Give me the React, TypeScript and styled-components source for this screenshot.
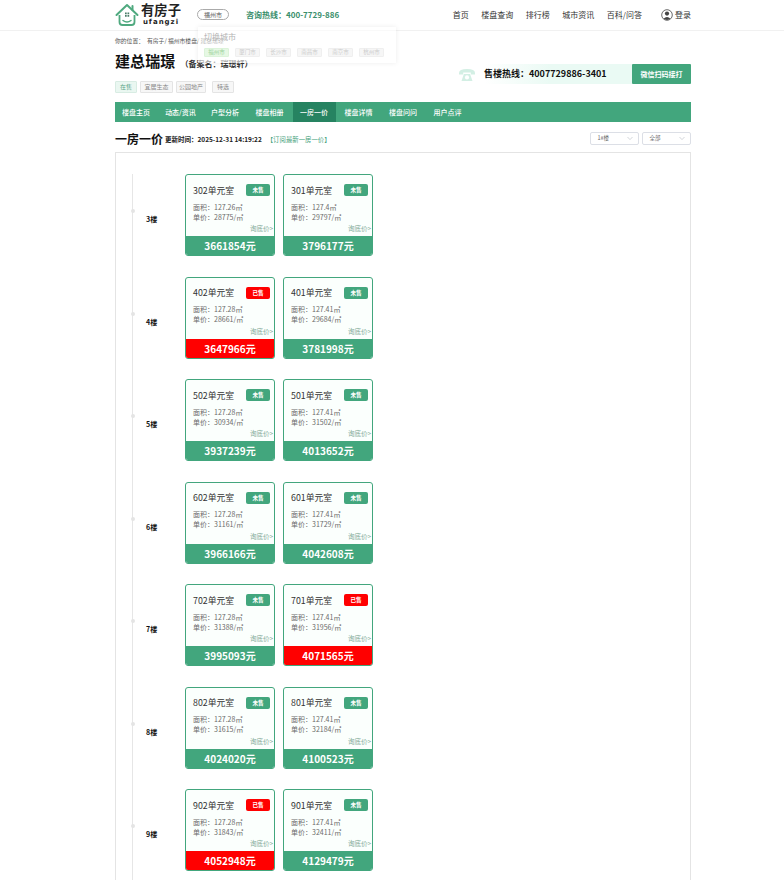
import React from "react";
import styled, { createGlobalStyle } from "styled-components";

const Global = createGlobalStyle`
  html, body { margin: 0; padding: 0; background: #fff; overflow: hidden; height: 880px; }
  body { font-family: "Noto Sans CJK SC", "Noto Sans", sans-serif; color: #222; }
  * { box-sizing: border-box; }
`;
const Page = styled.div`width: 784px; height: 880px; overflow: hidden;`;
const Header = styled.header`height: 31px; border-bottom: 1px solid #f1f1f1;`;
const Wrap = styled.div`width: 576px; margin-left: 115px; position: relative;`;
const HeaderRow = styled(Wrap)`display: flex; align-items: center; height: 29px;`;
const Logo = styled.div`display: flex; align-items: center; width: 66px; flex: none;`;
const LogoText = styled.div`display: flex; flex-direction: column; align-items: center; width: 40px; color: #222;`;
const LogoMain = styled.span`font-size: 13.3px; font-weight: 700; line-height: 12px;`;
const LogoSub = styled.span`font-family: "DejaVu Sans", sans-serif; font-size: 7px; font-weight: 700; line-height: 7px; letter-spacing: 1px; margin-top: 3px;`;
const CityPill = styled.div`margin-left: 16px; width: 32px; height: 11px; border: 1px solid #aaa; border-radius: 6px; font-size: 6px; line-height: 9px; text-align: center; color: #555; flex: none;`;
const Hotline = styled.div`margin-left: 17px; font-size: 8px; font-weight: 700; color: #3a8f6c; white-space: nowrap;`;
const TopNav = styled.nav`margin-left: auto; display: flex; align-items: center; font-size: 8px; color: #333; white-space: nowrap;`;
const TopLink = styled.a`margin-right: 12.5px;`;
const Login = styled.span`display: flex; align-items: center; gap: 2px; margin-left: 19px;`;
const Popup = styled.div`
  position: absolute; left: 83px; top: 27px; width: 198px; height: 36px; background: rgba(255,255,255,.6);
  box-shadow: 0 0 5px rgba(0,0,0,.08); padding: 4px 6px 0; z-index: 2;
`;
const PopupTitle = styled.div`font-size: 8px; line-height: 12px; margin: 0 0 5px; color: #b4b4b4;`;
const PopupChips = styled.div`display: flex; gap: 6px;`;
const PopupChip = styled.span<{ $on?: boolean }>`
  width: 25px; height: 9px; flex: none; text-align: center; font-size: 5.5px; line-height: 7.5px; border-radius: 1px;
  background: ${p => (p.$on ? "#e6f8e4" : "#f6f6f6")}; border: 1px solid ${p => (p.$on ? "#dcf3da" : "#efefef")}; color: ${p => (p.$on ? "#9bd29a" : "#ccc")};
`;
const Crumb = styled.div`margin-top: 5px; font-size: 5.8px; line-height: 10px; color: #555; display: flex; gap: 3px;`;
const TitleRow = styled.div`display: flex; align-items: baseline; margin-top: 5px; height: 20px;`;
const Title = styled.h1`margin: 0; font-size: 15px; line-height: 20px; font-weight: 700; color: #111; letter-spacing: .1px;`;
const Alias = styled.span`margin-left: 5px; font-size: 8px; font-weight: 700; color: #333;`;
const InfoRow = styled.div`display: flex; align-items: flex-start; height: 31px;`;
const Tags = styled.div`display: flex; margin-top: 10px;`;
const Tag = styled.span<{ $on?: boolean; $w: number; $mr: number }>`
  width: ${p => p.$w}px; margin-right: ${p => p.$mr}px; height: 12px; text-align: center; font-size: 6px; line-height: 10px; border-radius: 1px;
  background: ${p => (p.$on ? "#eaf7f1" : "#f7f7f7")}; border: 1px solid ${p => (p.$on ? "#d8ece3" : "#e4e4e4")}; color: ${p => (p.$on ? "#5aa588" : "#888")};
`;
const SaleLine = styled.div`margin-left: auto; margin-top: -7px; display: flex; align-items: center; height: 20px;`;
const Phone = styled.svg`width: 18px; height: 15px; margin-right: 8px; flex: none;`;
const SaleText = styled.div`width: 148px; height: 20px; line-height: 20px; font-size: 9px; font-weight: 700; color: #111; background: linear-gradient(90deg, #fff 0%, #eafaf4 45%, #eafaf4 100%); white-space: nowrap;`;
const WxBtn = styled.div`width: 59px; height: 20px; line-height: 20px; text-align: center; font-size: 7px; font-weight: 700; color: #fff; background: #42a67d; border-radius: 1px;`;
const TabBar = styled.nav`display: flex; height: 20px; background: #42a67d;`;
const Tab = styled.a<{ $on?: boolean }>`
  width: 43px; flex: none; margin-right: 1.5px; text-align: center; line-height: 20px; font-size: 7px; font-weight: 500; color: #fff; white-space: nowrap;
  background: ${p => (p.$on ? "#268361" : "transparent")};
  &:first-child { margin-left: -.5px; }
`;
const HeadRow = styled.div`display: flex; align-items: center; height: 31px; padding-top: 1px;`;
const H2 = styled.h2`margin: 2px 0 0; font-size: 12px; font-weight: 700; color: #111; line-height: 16px;`;
const Upd = styled.span`margin: 2px 0 0 2px; font-size: 6.5px; font-weight: 700; color: #222; white-space: nowrap;`;
const Sub = styled.span`margin: 2px 0 0 5px; font-size: 6.4px; color: #45a17c;`;
const Selects = styled.div`margin-left: auto; display: flex; gap: 2.5px;`;
const Sel = styled.div`width: 49.5px; height: 13px; border: 1px solid #dcdfe6; border-radius: 2px; font-size: 5.5px; line-height: 11px; padding-left: 7px; color: #666; position: relative;`;
const Arrow = styled.svg`position: absolute; right: 5px; top: 3px; width: 6px; height: 5px;`;
const Panel = styled.section`border: 1px solid #e4e4e4; border-bottom: none; height: 760px; padding: 21px 0 0 16px; margin-top: -1px;`;
const Timeline = styled.div`border-left: 1px solid #e6e6e6; display: flex; flex-direction: column; gap: 20.5px; min-height: 800px;`;
const Floor = styled.div`display: flex; align-items: center; height: 82px; position: relative;`;
const Dot = styled.i`position: absolute; left: -2.5px; top: 35px; width: 4px; height: 4px; border-radius: 50%; background: #e4e4e4;`;
const FloorName = styled.div`width: 39px; margin-left: 13px; padding-top: 8px; font-size: 7px; font-weight: 700; color: #111;`;
const Cards = styled.div`display: flex; gap: 8px;`;
const Card = styled.article`
  width: 90px; height: 82px; border: 1px solid #42a67d; border-radius: 3px; background: #fbfffd; position: relative; overflow: hidden;
`;
const Top = styled.div`display: flex; align-items: center; justify-content: space-between; padding: 5px 4px 0 7px; height: 25px;`;
const Room = styled.span`font-size: 8.8px; color: #333; white-space: nowrap;`;
const Status = styled.span<{ $sold?: boolean }>`width: 24px; height: 12px; border-radius: 2px; text-align: center; font-size: 5.6px; line-height: 12px; font-weight: 700; color: #fff; background: ${p => (p.$sold ? "#f00" : "#42a67d")};`;
const Meta = styled.div`padding: 1.5px 0 0 7px; font-size: 7px; line-height: 10px; color: #6b6b6b; white-space: nowrap;`;
const Ask = styled.div`position: absolute; right: 1px; top: 49px; font-size: 6.5px; line-height: 8px; color: #7fa997;`;
const Price = styled.div<{ $sold?: boolean }>`position: absolute; left: 0; right: 0; bottom: 0; height: 19px; text-align: center; line-height: 19px; font-size: 10px; font-weight: 700; color: #fff; background: ${p => (p.$sold ? "#f00" : "#42a67d")};`;

type U = { room: string; area: string; unit: number; total: number; sold?: boolean };
const floors: { f: string; u: U[] }[] = [
  { f: "3楼", u: [{ room: "302", area: "127.26", unit: 28775, total: 3661854 }, { room: "301", area: "127.4", unit: 29797, total: 3796177 }] },
  { f: "4楼", u: [{ room: "402", area: "127.28", unit: 28661, total: 3647966, sold: true }, { room: "401", area: "127.41", unit: 29684, total: 3781998 }] },
  { f: "5楼", u: [{ room: "502", area: "127.28", unit: 30934, total: 3937239 }, { room: "501", area: "127.41", unit: 31502, total: 4013652 }] },
  { f: "6楼", u: [{ room: "602", area: "127.28", unit: 31161, total: 3966166 }, { room: "601", area: "127.41", unit: 31729, total: 4042608 }] },
  { f: "7楼", u: [{ room: "702", area: "127.28", unit: 31388, total: 3995093 }, { room: "701", area: "127.41", unit: 31956, total: 4071565, sold: true }] },
  { f: "8楼", u: [{ room: "802", area: "127.28", unit: 31615, total: 4024020 }, { room: "801", area: "127.41", unit: 32184, total: 4100523 }] },
  { f: "9楼", u: [{ room: "902", area: "127.28", unit: 31843, total: 4052948, sold: true }, { room: "901", area: "127.41", unit: 32411, total: 4129479 }] },
];
const chevron = (
  <Arrow viewBox="0 0 6 5"><path d="M.5 1 3 3.6 5.5 1" fill="none" stroke="#c0c4cc" strokeWidth=".7" /></Arrow>
);

export default function App() {
  return (
    <Page>
      <Global />
      <Header>
        <HeaderRow>
          <Logo>
            <svg width="26" height="24" viewBox="0 0 26 24">
              <path d="M1.5 12 12 2l10.500 10" fill="none" stroke="#4fa97f" strokeWidth="2" strokeLinecap="round" strokeLinejoin="round" />
              <path d="M17.500 3v4" stroke="#4fa97f" strokeWidth="2" strokeLinecap="round" />
              <path d="M4.500 12v7q0 3 3 3h9q3 0 3-3v-7" fill="none" stroke="#4fa97f" strokeWidth="1.8" />
              <path d="M8 17.500q4 3 8 0" fill="none" stroke="#4fa97f" strokeWidth="1.5" strokeLinecap="round" />
              <path d="M10 9.500h1.700v1.700H10zM12.500 9.500h1.700v1.700h-1.700zM10 12.100h1.700v1.700H10zM12.500 12.100h1.700v1.700h-1.700z" fill="#4a7d68" />
            </svg>
            <LogoText>
              <LogoMain>有房子</LogoMain>
              <LogoSub>ufangzi</LogoSub>
            </LogoText>
          </Logo>
          <CityPill>福州市</CityPill>
          <Hotline>咨询热线：400-7729-886</Hotline>
          <TopNav>
            <TopLink>首页</TopLink>
            <TopLink>楼盘查询</TopLink>
            <TopLink>排行榜</TopLink>
            <TopLink>城市资讯</TopLink>
            <span>百科/问答</span>
            <Login>
              <svg width="12" height="12" viewBox="0 0 12 12">
                <circle cx="6" cy="6" r="5.300" fill="none" stroke="#444" strokeWidth=".8" />
                <circle cx="6" cy="4.600" r="2.100" fill="#444" />
                <path d="M2.500 9.800q3.500-3.700 7 0-3.500 2.200-7 0z" fill="#444" />
              </svg>
              登录
            </Login>
          </TopNav>
          <Popup>
            <PopupTitle>切换城市</PopupTitle>
            <PopupChips>
              <PopupChip $on>福州市</PopupChip>
              <PopupChip>厦门市</PopupChip>
              <PopupChip>长沙市</PopupChip>
              <PopupChip>南昌市</PopupChip>
              <PopupChip>南京市</PopupChip>
              <PopupChip>杭州市</PopupChip>
            </PopupChips>
          </Popup>
        </HeaderRow>
      </Header>
      <Wrap>
        <Crumb><span>你的位置：</span><span>有房子/ 福州市楼盘/ 建总瑞璟</span></Crumb>
        <TitleRow>
          <Title>建总瑞璟</Title>
          <Alias>（备案名：瑞璟轩）</Alias>
        </TitleRow>
        <InfoRow>
          <Tags>
            <Tag $on $w={22} $mr={3}>在售</Tag>
            <Tag $w={33} $mr={3}>宜居生态</Tag>
            <Tag $w={30} $mr={6}>公园地产</Tag>
            <Tag $w={22} $mr={0}>特选</Tag>
          </Tags>
          <SaleLine>
            <Phone viewBox="0 0 18 15">
              <path d="M1 6q0-4 8-4t8 4v1.600h-4.200V5.400H5.200v2.200H1z" fill="#d3efe4" />
              <path d="M3.500 14 5.900 7h6.200l2.400 7z" fill="#d3efe4" />
              <circle cx="9" cy="10.400" r="2.100" fill="#fff" />
            </Phone>
            <SaleText>售楼热线：4007729886-3401</SaleText>
            <WxBtn>微信扫码接打</WxBtn>
          </SaleLine>
        </InfoRow>
        <TabBar>
          <Tab>楼盘主页</Tab>
          <Tab>动态/资讯</Tab>
          <Tab>户型分析</Tab>
          <Tab>楼盘相册</Tab>
          <Tab $on>一房一价</Tab>
          <Tab>楼盘详情</Tab>
          <Tab>楼盘问问</Tab>
          <Tab>用户点评</Tab>
        </TabBar>
        <HeadRow>
          <H2>一房一价</H2>
          <Upd>更新时间：2025-12-31 14:19:22</Upd>
          <Sub>【订阅最新一房一价】</Sub>
          <Selects>
            <Sel>1#楼{chevron}</Sel>
            <Sel>全部{chevron}</Sel>
          </Selects>
        </HeadRow>
        <Panel>
          <Timeline>
            {floors.map(fl => (
              <Floor key={fl.f}>
                <Dot />
                <FloorName>{fl.f}</FloorName>
                <Cards>
                  {fl.u.map(u => (
                    <Card key={u.room}>
                      <Top>
                        <Room>{u.room}单元室</Room>
                        <Status $sold={u.sold}>{u.sold ? "已售" : "未售"}</Status>
                      </Top>
                      <Meta>
                        面积：{u.area}㎡<br />
                        单价：{u.unit}/㎡
                      </Meta>
                      <Ask>询底价&gt;</Ask>
                      <Price $sold={u.sold}>{u.total}元</Price>
                    </Card>
                  ))}
                </Cards>
              </Floor>
            ))}
          </Timeline>
        </Panel>
      </Wrap>
    </Page>
  );
}
